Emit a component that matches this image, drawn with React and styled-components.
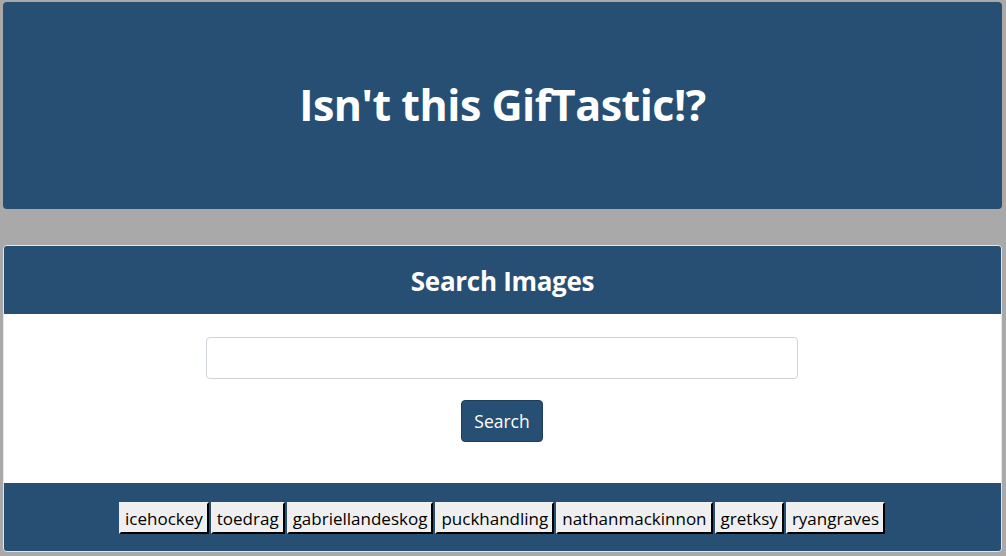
import React from "react";
import styled, { createGlobalStyle } from "styled-components";

const Global = createGlobalStyle`
  html, body { margin: 0; padding: 0; }
  body {
    background: #a9a9a9;
    font-family: "Open Sans", "Noto Sans", sans-serif;
  }
`;

const BLUE = "#264f73";

const Page = styled.div`
  padding: 2px 4px 0 3px;
  display: flex;
  flex-direction: column;
  gap: 36px;
`;

const Jumbo = styled.header`
  background: ${BLUE};
  border-radius: 4px;
  height: 207px;
  display: flex;
  align-items: center;
  justify-content: center;
`;

const Title = styled.h1`
  margin: 0;
  color: #fff;
  font-size: 43px;
  font-weight: 700;
  letter-spacing: -0.5px;
  line-height: 1;
  padding-bottom: 2px;
`;

const Card = styled.section`
  border: 1px solid rgba(255, 255, 255, 0.7);
  border-radius: 4px;
  overflow: hidden;
  display: flex;
  flex-direction: column;
`;

const CardHeader = styled.div`
  background: ${BLUE};
  height: 68px;
  display: flex;
  align-items: center;
  justify-content: center;
`;

const CardTitle = styled.h3`
  margin: 0;
  color: #fff;
  font-size: 26px;
  font-weight: 700;
  letter-spacing: -0.3px;
  padding-top: 2px;
`;

const CardBody = styled.div`
  background: #fff;
  height: 169px;
  display: flex;
  flex-direction: column;
  align-items: center;
  padding: 23px 1px 0 0;
  box-sizing: border-box;
  gap: 21px;
`;

const Input = styled.input`
  width: 592px;
  height: 42px;
  box-sizing: border-box;
  border: 1px solid #ced4da;
  border-radius: 4px;
  font-family: inherit;
  font-size: 16px;
  padding: 6px 12px;
`;

const SearchButton = styled.button`
  background: ${BLUE};
  color: #fff;
  border: 1px solid #1d3e5b;
  border-radius: 4px;
  width: 82px;
  height: 42px;
  font-family: inherit;
  font-size: 17.5px;
  padding: 0;
`;

const CardFooter = styled.div`
  background: ${BLUE};
  height: 68px;
  display: flex;
  align-items: center;
  justify-content: center;
  gap: 2px;
  padding: 2px 1px 0 0;
  box-sizing: border-box;
`;

const Tag = styled.button`
  background: #efefef;
  color: #000;
  border: 2px outset #767676;
  border-color: #f0f0f0 #333 #333 #f0f0f0;
  font-family: inherit;
  font-size: 17px;
  height: 32px;
  padding: 0 4px;
  margin: 0;
`;

const tags = [
  "icehockey",
  "toedrag",
  "gabriellandeskog",
  "puckhandling",
  "nathanmackinnon",
  "gretksy",
  "ryangraves",
];

export default function App() {
  return (
    <>
      <Global />
      <Page>
        <Jumbo>
          <Title>Isn't this GifTastic!?</Title>
        </Jumbo>
        <Card>
          <CardHeader>
            <CardTitle>Search Images</CardTitle>
          </CardHeader>
          <CardBody>
            <Input type="text" />
            <SearchButton>Search</SearchButton>
          </CardBody>
          <CardFooter>
            {tags.map((t) => (
              <Tag key={t}>{t}</Tag>
            ))}
          </CardFooter>
        </Card>
      </Page>
    </>
  );
}
